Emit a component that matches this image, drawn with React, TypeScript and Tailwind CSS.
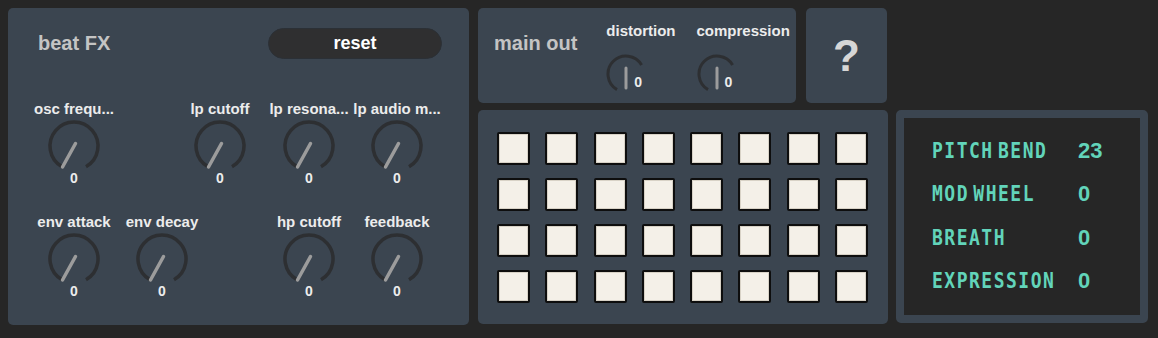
import React from "react";

// Big dial used in the beat FX panel
function BigKnob() {
  return (
    <svg width="56" height="54" viewBox="0 0 56 54">
      <path
        d="M 16 47.78 A 24 24 0 1 1 40 47.78"
        fill="none"
        stroke="#2d2f32"
        strokeWidth="3.5"
      />
      <line x1="29.5" y1="24.5" x2="16.5" y2="48" stroke="#9c9c9c" strokeWidth="3.5" strokeLinecap="round" />
    </svg>
  );
}

// Small dial used in main out
function SmallKnob() {
  return (
    <svg width="44" height="42" viewBox="0 0 44 42" className="shrink-0">
      <path
        d="M 11 36.59 A 18 18 0 1 1 35.59 12"
        fill="none"
        stroke="#2d2f32"
        strokeWidth="3"
      />
      <line x1="20" y1="15" x2="20" y2="35" stroke="#9c9c9c" strokeWidth="3" strokeLinecap="round" />
    </svg>
  );
}

type KnobProps = { label: string; className?: string };

function Knob({ label, className }: KnobProps) {
  return (
    <div className={`flex w-[88px] flex-col items-center ${className ?? ""}`}>
      <div className="h-[18px] whitespace-nowrap text-[15px] leading-[18px] font-bold text-[#ececec]">{label}</div>
      <div className="mt-[1px]">
        <BigKnob />
      </div>
      <div className="-mt-[2px] h-[14px] text-[14px] leading-[14px] font-bold text-[#ececec]">0</div>
    </div>
  );
}

function OutKnob({ label, className }: KnobProps) {
  return (
    <div className={`flex flex-col items-start ${className ?? ""}`}>
      <div className="h-[16px] whitespace-nowrap text-[15px] leading-[16px] font-bold text-[#ececec]">{label}</div>
      <div className="mt-[14px] flex items-start">
        <SmallKnob />
        <span className="-ml-[16px] mt-[22px] text-[14px] leading-[14px] font-bold text-[#ececec]">0</span>
      </div>
    </div>
  );
}

const midiRows = [
  { label: "PITCH BEND", value: "23" },
  { label: "MOD WHEEL", value: "0" },
  { label: "BREATH", value: "0" },
  { label: "EXPRESSION", value: "0" },
];

export default function App() {
  const pads = Array.from({ length: 32 }, (_, i) => i);

  return (
    <div
      className="flex h-[338px] w-[1158px] gap-[9px] overflow-hidden bg-[#262626] pl-2 pt-2"
      style={{ fontFamily: '"Liberation Sans", Arial, sans-serif' }}
    >
      {/* beat FX */}
      <div className="flex h-[317px] w-[461px] shrink-0 flex-col rounded-[5px] bg-[#3b4550] pt-5">
        <div className="flex h-[31px] items-center">
          <div className="ml-[30px] -mt-[2px] text-[20px] font-bold text-[#c4c4c4]">beat FX</div>
          <button className="ml-auto mr-[27px] h-[31px] w-[174px] rounded-full border border-[#2b3036] bg-[#2f2f30] text-[18px] font-bold text-white">
            reset
          </button>
        </div>
        <div className="mt-[41px] flex pl-[22px]">
          <Knob label="osc frequ..." />
          <Knob label="lp cutoff" className="ml-[58px]" />
          <Knob label="lp resona..." className="ml-[1px]" />
          <Knob label="lp audio m..." />
        </div>
        <div className="mt-[28px] flex pl-[22px]">
          <Knob label="env attack" />
          <Knob label="env decay" />
          <Knob label="hp cutoff" className="ml-[59px]" />
          <Knob label="feedback" />
        </div>
      </div>

      <div className="flex flex-col gap-[7px]">
        {/* top row */}
        <div className="flex h-[95px] gap-[10px]">
          <div className="flex w-[318px] rounded-[5px] bg-[#3b4550]">
            <div className="ml-4 mt-[20px] text-[20px] font-bold text-[#c4c4c4]">main out</div>
            <OutKnob label="distortion" className="ml-[29px] mt-[15px]" />
            <OutKnob label="compression" className="ml-[21px] mt-[15px]" />
          </div>
          <div className="flex w-[81px] items-center justify-center rounded-[5px] bg-[#3b4550] text-[44px] leading-none font-bold text-[#d6d6d6]">
            ?
          </div>
        </div>

        {/* bottom row */}
        <div className="flex gap-2">
          <div className="h-[214px] w-[410px] rounded-[5px] bg-[#3b4550] pl-[19px] pt-[22px]">
            <div className="grid grid-cols-[repeat(8,33px)] gap-x-[15.3px] gap-y-[13px]">
              {pads.map((p) => (
                <div
                  key={p}
                  className="h-[33px] w-[33px] rounded-[2px] border-[2.5px] border-[#0e0e0e] bg-[#f4f0e8] shadow-[inset_0_0_0_1px_#d8d2c6]"
                />
              ))}
            </div>
          </div>

          <div className="h-[213px] w-[252px] rounded-[5px] border-8 border-[#3b4550] bg-[#262626] pl-[28px] pt-[11px]">
            {midiRows.map((r) => (
              <div key={r.label} className="flex h-[43.3px] items-center">
                <div
                  className="w-[146px] origin-left scale-y-[1.22] text-[18px] font-bold tracking-[1.5px] text-[#62d4ba] [word-spacing:-8px]"
                  style={{ fontFamily: '"DejaVu Sans Mono", monospace' }}
                >
                  {r.label}
                </div>
                <div className="text-[22px] font-bold text-[#62d4ba]">{r.value}</div>
              </div>
            ))}
          </div>
        </div>
      </div>
    </div>
  );
}
